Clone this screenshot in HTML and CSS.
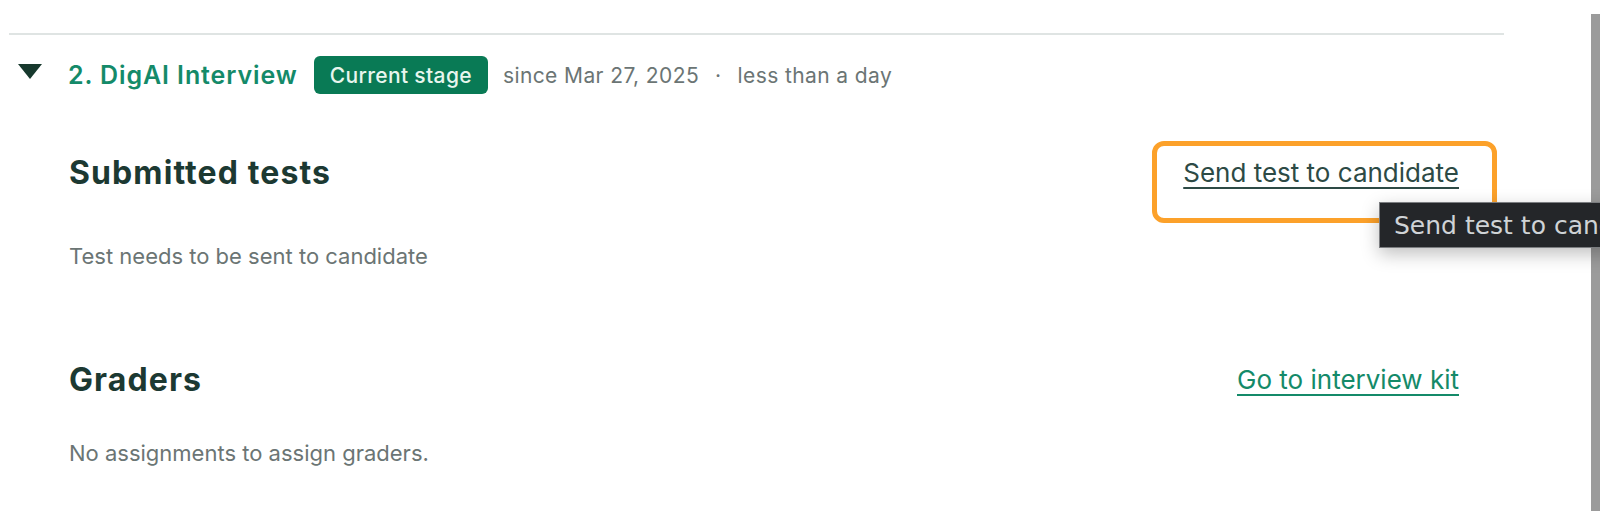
FILE: index.html
```html
<!DOCTYPE html>
<html lang="en">
<head>
<meta charset="utf-8">
<title>DigAI Interview</title>
<link rel="stylesheet" href="styles.css">
</head>
<body>
<div class="page">
  <div class="divider"></div>
  <div class="stage-header">
    <span class="caret"></span>
    <span class="stage-title">2. DigAI Interview</span>
    <span class="badge">Current stage</span>
    <span class="meta">since Mar 27, 2025</span>
    <span class="meta dot">·</span>
    <span class="meta">less than a day</span>
  </div>
  <section class="section first">
    <div class="section-head">
      <h2 class="section-title">Submitted tests</h2>
      <a class="link dark highlight" href="#">Send test to candidate</a>
    </div>
    <p class="note">Test needs to be sent to candidate</p>
  </section>
  <section class="section second">
    <div class="section-head">
      <h2 class="section-title">Graders</h2>
      <a class="link green" href="#">Go to interview kit</a>
    </div>
    <p class="note">No assignments to assign graders.</p>
  </section>
</div>
<div class="edge-bar"></div>
<div class="tooltip">Send test to candidate</div>
</body>
</html>
```
FILE: styles.css
```css
html, body {
  margin: 0;
  padding: 0;
  background: #ffffff;
  width: 1600px;
  height: 530px;
  overflow: hidden;
}
body {
  font-family: Inter, "Noto Sans", sans-serif;
  position: relative;
}
.page {
  width: 1495px;
  padding: 33px 0 0 9px;
}
.divider {
  border-top: 2px solid #dfe4e3;
}
.stage-header {
  display: flex;
  align-items: center;
  height: 80px;
  padding-left: 9px;
}
.caret {
  width: 0;
  height: 0;
  border-left: 12.5px solid transparent;
  border-right: 12.5px solid transparent;
  border-top: 15px solid #17392d;
  margin-right: 26px;
  margin-top: -7px;
}
.stage-title {
  font-size: 25px;
  line-height: 30px;
  font-weight: 600;
  color: #148a69;
  letter-spacing: 0.9px;
}
.badge {
  margin-left: 16px;
  background: #097a55;
  color: #e8f6ee;
  font-size: 21px;
  font-weight: 500;
  letter-spacing: 0.35px;
  height: 38px;
  display: inline-flex;
  align-items: center;
  padding: 0 16px;
  border-radius: 6px;
}
.meta {
  color: #6b7574;
  font-size: 21px;
  letter-spacing: 0.4px;
  margin-left: 15px;
}
.meta.dot {
  margin-left: 16px;
  margin-right: 1px;
}
.section {
  padding: 0 45px 0 60px;
}
.section-head {
  display: flex;
  justify-content: space-between;
  align-items: center;
}
.section-title {
  margin: 0;
  font-size: 32px;
  line-height: 38px;
  font-weight: 700;
  letter-spacing: 1.1px;
  color: #1c3932;
}
.first {
  padding-top: 39px;
}
.second {
  padding-top: 92px;
}
.note {
  margin: 0;
  font-size: 22px;
  line-height: 26px;
  color: #6b7574;
}
.first .note {
  margin-top: 51px;
}
.second .note {
  margin-top: 41px;
}
.link {
  font-size: 26px;
  line-height: 32px;
  text-decoration: underline;
  text-underline-offset: 5px;
  text-decoration-thickness: 2px;
}
.link.dark {
  color: #2d4a45;
}
.link.green {
  color: #148a69;
}
.highlight {
  position: relative;
}
.highlight::after {
  content: "";
  position: absolute;
  left: -31px;
  right: -38px;
  top: -16px;
  bottom: -34px;
  border: 5px solid #fca12a;
  border-radius: 12px;
}
.edge-bar {
  position: absolute;
  right: 0;
  top: 14px;
  width: 9px;
  height: 497px;
  background: #9b9b9b;
}
.tooltip {
  position: absolute;
  left: 1379px;
  top: 202px;
  height: 44px;
  padding: 0 14px;
  display: flex;
  align-items: center;
  background: #242629;
  border: 1px solid #7b7d80;
  color: #cfd3d6;
  font-family: "DejaVu Sans", sans-serif;
  font-size: 25px;
  white-space: nowrap;
  box-shadow: 0 6px 18px rgba(0,0,0,0.25);
}
```
